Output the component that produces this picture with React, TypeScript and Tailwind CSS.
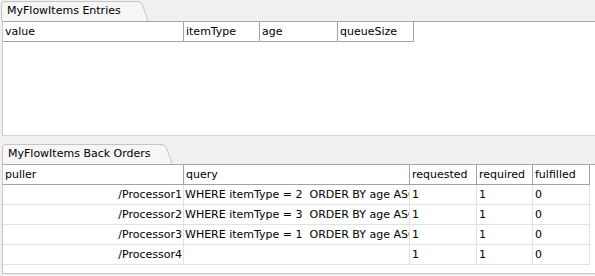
import React from "react";

function Tab({ label, width, slantEnd }: { label: string; width: number; slantEnd: number }) {
  const top = slantEnd - 10;
  return (
    <div className="relative h-[21px]" style={{ width }}>
      <svg className="absolute inset-0" width={width} height={21} viewBox={`0 0 ${width} 21`}>
        <path
          d={`M0.5 21 L0.5 5 Q0.5 1.5 4 1.5 L${top} 1.5 Q${top + 3} 1.5 ${top + 4.5} 5 L${slantEnd} 21`}
          fill="#f6f6f6"
          stroke="#c4c4c4"
          strokeWidth="1"
        />
      </svg>
      <span className="absolute left-[6px] top-[2px] leading-[18px] text-black whitespace-nowrap">{label}</span>
    </div>
  );
}

function HCell({ w, children }: { w: string; children?: React.ReactNode }) {
  return (
    <div className={`${w} h-full shrink-0 border-r border-b border-[#a3a3a3] pl-[2px] leading-[19px] whitespace-nowrap overflow-hidden`}>
      {children}
    </div>
  );
}

const rows = [
  { puller: "/Processor1", query: "WHERE itemType = 2  ORDER BY age ASC", req: "1", reqd: "1", ful: "0" },
  { puller: "/Processor2", query: "WHERE itemType = 3  ORDER BY age ASC", req: "1", reqd: "1", ful: "0" },
  { puller: "/Processor3", query: "WHERE itemType = 1  ORDER BY age ASC", req: "1", reqd: "1", ful: "0" },
  { puller: "/Processor4", query: "", req: "1", reqd: "1", ful: "0" },
];

export default function App() {
  return (
    <div className="w-[595px] h-[276px] overflow-hidden bg-[#f0f0f0] font-['DejaVu_Sans',Verdana,sans-serif] text-[11px] text-black">
      {/* Top panel */}
      <div className="h-[21px] pl-[1px] flex items-end">
        <Tab label="MyFlowItems Entries" width={150} slantEnd={147} />
      </div>
      <div className="h-[115px] ml-[2px] bg-white border-t border-[#a8a8a8] border-l border-l-[#c8c8c8] border-b border-b-[#d4d4d4]">
        <div className="flex h-[20px]">
          <HCell w="w-[181px]">value</HCell>
          <HCell w="w-[76px]">itemType</HCell>
          <HCell w="w-[78px]">age</HCell>
          <HCell w="w-[76px]">queueSize</HCell>
        </div>
      </div>

      {/* Bottom panel */}
      <div className="h-[28px] pl-[2px] flex items-end">
        <Tab label="MyFlowItems Back Orders" width={175} slantEnd={170} />
      </div>
      <div className="h-[110px] ml-[2px] bg-white border-t border-[#a8a8a8] border-l border-l-[#c8c8c8] border-b border-b-[#c8c8c8]">
        <div className="flex h-[20px]">
          <HCell w="w-[181px]">puller</HCell>
          <HCell w="w-[226px]">query</HCell>
          <HCell w="w-[67px]">requested</HCell>
          <HCell w="w-[56px]">required</HCell>
          <HCell w="w-[57px]">fulfilled</HCell>
        </div>
        {rows.map((r) => (
          <div key={r.puller} className="flex h-[20px]">
            <div className="w-[181px] shrink-0 border-r border-b border-[#e2e2e2] pr-[1px] text-right leading-[19px] whitespace-nowrap overflow-hidden">
              {r.puller}
            </div>
            <div className="w-[226px] shrink-0 border-r border-b border-[#e2e2e2] pl-[1px] leading-[19px] whitespace-pre overflow-hidden">
              {r.query}
            </div>
            <div className="w-[67px] shrink-0 border-r border-b border-[#e2e2e2] pl-[2px] leading-[19px]">{r.req}</div>
            <div className="w-[56px] shrink-0 border-r border-b border-[#e2e2e2] pl-[2px] leading-[19px]">{r.reqd}</div>
            <div className="w-[57px] shrink-0 border-r border-b border-[#e2e2e2] pl-[2px] leading-[19px]">{r.ful}</div>
          </div>
        ))}
      </div>
    </div>
  );
}
